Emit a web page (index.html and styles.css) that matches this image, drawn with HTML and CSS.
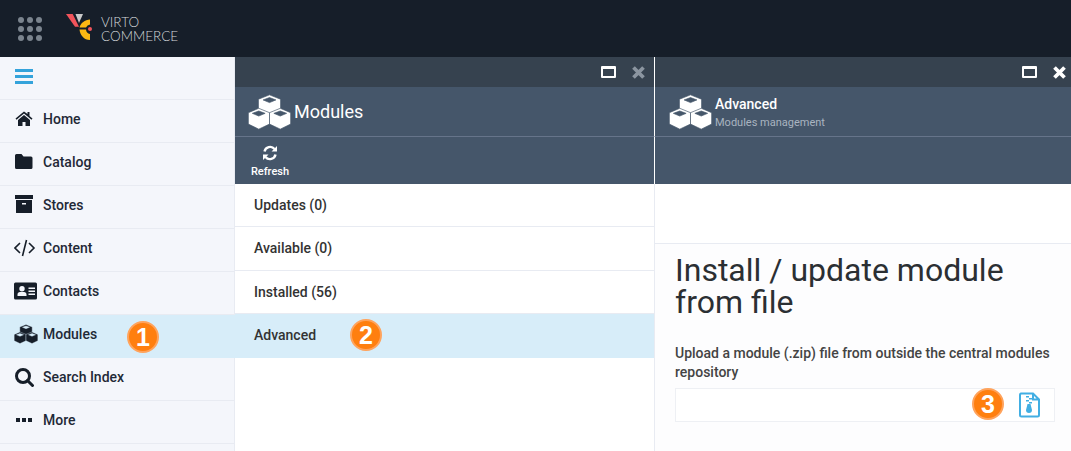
FILE: index.html
```html
<!DOCTYPE html>
<html lang="en">
<head>
  <meta charset="UTF-8" />
  <title>Virto Commerce - Modules</title>
  <link rel="stylesheet" href="styles.css">
</head>
<body>
  <svg class="defs" width="0" height="0" aria-hidden="true">
    <symbol id="cubes" viewBox="0 0 128 104">
      <path class="cube" fill-rule="evenodd" d="M64 1l33 13v33l-33 14-33-14V14zM64 9L45 16l19 8 19-8z"/>
      <path class="cube" fill-rule="evenodd" d="M32 41l32 13v34l-32 15L1 88V54zM32 49L13 56l19 8 19-8z"/>
      <path class="cube" fill-rule="evenodd" d="M96 41l31 13v34l-31 15-32-15V54zM96 49l-19 7 19 8 19-8z"/>
    </symbol>
  </svg>

  <header class="topbar">
    <div class="apps">
      <i></i><i></i><i></i><i></i><i></i><i></i><i></i><i></i><i></i>
    </div>
    <svg class="logo-mark" viewBox="0 0 26 26">
      <path fill="#f2545b" d="M0 0h6.700L13 12.700H9z"/>
      <path fill="#c9c9c9" d="M9.500 0H17l-4 9z"/>
      <path fill="#fdb813" d="M24 5.500v5a5 5 0 0 0-4 3h-6.500C14.500 9 19 6 24 5.500z"/>
      <path fill="#fdb813" d="M13.500 15.500H20a5 5 0 0 0 4 4.500V26C18 26 14 21 13.500 15.500z"/>
      <circle fill="#f2545b" cx="24" cy="15" r="2"/>
    </svg>
    <div class="logo-text">VIRTO<br>COMMERCE</div>
  </header>

  <div class="main">
    <nav class="sidebar">
      <div class="menu-toggle"><span></span><span></span><span></span></div>
      <a class="nav-item">
        <svg viewBox="0 0 24 20"><path d="M10 2.500L1.500 9.500l1 1.200L10 4.600l7.500 6.100 1-1.200-3-2.500V3h-2v2z"/><path d="M10 6l-6 5v6h4.500v-4h3v4H16v-6z"/></svg>
        Home
      </a>
      <a class="nav-item">
        <svg viewBox="0 0 24 20"><path d="M1 3.500A1.500 1.500 0 0 1 2.500 2h5l2 2.500h7.500A1.500 1.500 0 0 1 18.500 6v9.500a1.500 1.500 0 0 1-1.500 1.500H2.500A1.500 1.500 0 0 1 1 15.500z"/></svg>
        Catalog
      </a>
      <a class="nav-item">
        <svg viewBox="0 0 24 20"><path d="M1 0h18v4H1z"/><path fill-rule="evenodd" d="M2 5h16v12.500a.5.5 0 0 1-.5.5h-15a.5.5 0 0 1-.5-.5zM8 8v1.500h4V8z"/></svg>
        Stores
      </a>
      <a class="nav-item">
        <svg viewBox="0 0 24 20"><path class="line" d="M6 5l-5 5 5 5M15 5l5 5-5 5M12.500 2l-4 16"/></svg>
        Content
      </a>
      <a class="nav-item">
        <svg viewBox="0 0 24 20"><path fill-rule="evenodd" d="M1.500 1.500h20A1.500 1.500 0 0 1 23 3v14a1.500 1.500 0 0 1-1.500 1.500h-20A1.500 1.500 0 0 1 0 17V3a1.500 1.500 0 0 1 1.500-1.500zM8 5a2.700 2.700 0 1 0 0 5.400A2.700 2.700 0 0 0 8 5zM3.500 15h9v-1.500c0-1.500-1-2.500-2.500-2.500H6c-1.500 0-2.500 1-2.500 2.500zM14.500 6.500V8H21V6.500zM14.500 9.500V11H21V9.500zM14.500 12.500V14H21v-1.500z"/></svg>
        Contacts
      </a>
      <a class="nav-item active">
        <svg class="cubes" viewBox="0 0 24 20"><use href="#cubes" width="24" height="20"/></svg>
        Modules
        <span class="step step-1">1</span>
      </a>
      <a class="nav-item">
        <svg viewBox="0 0 24 20"><circle class="ring" cx="9" cy="9" r="6.500"/><path class="handle" d="M13.500 13.500l5 5"/></svg>
        Search Index
      </a>
      <a class="nav-item">
        <svg viewBox="0 0 24 20"><path d="M2 8h4v4H2zM8 8h4v4H8zM14 8h4v4h-4z"/></svg>
        More
      </a>
    </nav>

    <section class="blade blade-list">
      <div class="blade-bar">
        <span class="maximize"></span>
        <svg class="close muted" viewBox="0 0 12 12"><path d="M2 2l8 8M10 2l-8 8"/></svg>
      </div>
      <div class="blade-head">
        <svg class="blade-icon cubes"><use href="#cubes" width="43" height="36"/></svg>
        <h1 class="blade-title">Modules</h1>
      </div>
      <div class="toolbar">
        <button class="tool" type="button">
          <svg viewBox="0 0 16 16"><path class="refresh" d="M2.500 6.500A5.700 5.700 0 0 1 12.500 4M13.500 9.500A5.700 5.700 0 0 1 3.500 12"/><path d="M15 1v5.500H9.500zM1 15V9.500h5.500z"/></svg>
          Refresh
        </button>
      </div>
      <ul class="list">
        <li>Updates (0)</li>
        <li>Available (0)</li>
        <li>Installed (56)</li>
        <li class="active">Advanced<span class="step step-2">2</span></li>
      </ul>
    </section>

    <section class="blade blade-advanced">
      <div class="blade-bar">
        <span class="maximize"></span>
        <svg class="close" viewBox="0 0 12 12"><path d="M2 2l8 8M10 2l-8 8"/></svg>
      </div>
      <div class="blade-head">
        <svg class="blade-icon cubes"><use href="#cubes" width="43" height="36"/></svg>
        <div class="head-text">
          <div class="head-name">Advanced</div>
          <div class="head-sub">Modules management</div>
        </div>
      </div>
      <div class="toolbar"></div>
      <div class="spacer"></div>
      <div class="content">
        <h2>Install / update module from file</h2>
        <label class="upload-label">Upload a module (.zip) file from outside the central modules repository</label>
        <div class="upload-box">
          <span class="step step-3">3</span>
          <svg class="zip" viewBox="0 0 22 26"><path class="zip-outline" d="M2 1.500h12l6 6V23a1.500 1.500 0 0 1-1.500 1.500h-16A1.500 1.500 0 0 1 1 23V3a1.500 1.500 0 0 1 1-1.500zM14 1.500V7.500h6"/><path class="zip-teeth" d="M7 4h3v1.500H7zM10 6h3v1.500h-3zM7 8h3v1.500H7zM10 10h3v1.500h-3zM8.500 12h3l1.500 6a3 3 0 1 1-6 0z"/></svg>
        </div>
      </div>
    </section>
  </div>
</body>
</html>
```

FILE: styles.css
```css
* {
  box-sizing: border-box;
}

html, body {
  height: 100%;
}

body {
  margin: 0;
  overflow: hidden;
  font-family: Roboto, 'Liberation Sans', sans-serif;
  font-size: 14px;
  font-weight: 500;
  color: #1f2937;
  background: #fff;
}

.defs {
  display: block;
  height: 0;
}

/* top bar */
.topbar {
  height: 57px;
  background: #161e29;
  display: flex;
  align-items: center;
  padding-left: 18px;
}

.apps {
  display: grid;
  grid-template-columns: repeat(3, 6px);
  gap: 3px;
  margin-right: 21px;
}

.apps i {
  width: 6px;
  height: 6px;
  border-radius: 50%;
  background: #7b848e;
}

.logo-mark {
  width: 26px;
  height: 26px;
  margin: 0 9px 3px 3px;
}

.logo-text {
  font-family: Lato, sans-serif;
  font-weight: 300;
  font-size: 13.5px;
  line-height: 14px;
  color: #d4d7da;
}

/* layout */
.main {
  display: flex;
  height: 394px;
}

.sidebar {
  width: 235px;
  flex-shrink: 0;
  background: #f4f6fb;
  border-right: 1px solid #e8ebf2;
}

.menu-toggle {
  height: 43px;
  padding: 12px 15px 0;
  border-bottom: 1px solid #e8ebf2;
}

.menu-toggle span {
  display: block;
  width: 18px;
  height: 3px;
  margin-bottom: 3px;
  background: #34a3db;
}

.nav-item {
  position: relative;
  height: 43px;
  display: flex;
  align-items: center;
  padding: 0 0 5px 14px;
  border-bottom: 1px solid #e8ebf2;
  color: #1f2937;
}

.nav-item svg {
  width: 24px;
  height: 20px;
  margin-right: 5px;
  fill: #161e29;
}

.nav-item.active {
  background: #d7edf9;
  margin-right: -1px;
  border-bottom: 0;
}

.line {
  fill: none;
  stroke: #161e29;
  stroke-width: 1.6;
}

.ring, .handle {
  fill: none;
  stroke: #161e29;
  stroke-width: 3;
}

.handle {
  stroke-linecap: round;
}

/* cube icons */
.cubes {
  --cube-fill: #fff;
  --cube-gap: #45566a;
}

.nav-item .cubes {
  --cube-fill: #161e29;
  --cube-gap: #d7edf9;
}

.cube {
  fill: var(--cube-fill);
  stroke: var(--cube-gap);
  stroke-width: 2;
}

/* blades */
.blade {
  display: flex;
  flex-direction: column;
}

.blade-list {
  width: 420px;
  flex-shrink: 0;
  border-right: 1px solid #e8ebf2;
}

.blade-advanced {
  flex: 1;
  background: #fff;
}

.blade-bar {
  height: 30px;
  background: #36424f;
  display: flex;
  align-items: center;
  justify-content: flex-end;
  gap: 15px;
  padding-right: 4px;
  flex-shrink: 0;
}

.blade-list .blade-bar {
  padding-right: 8px;
}

.blade-list .blade-bar,
.blade-list .blade-head,
.blade-list .toolbar {
  margin-right: -1px;
  border-right: 1px solid #fff;
}

.maximize {
  width: 15px;
  height: 12px;
  border: 2px solid #fff;
  border-top-width: 3px;
  border-radius: 1px;
}

.close {
  width: 15px;
  height: 15px;
  fill: none;
  stroke: #fff;
  stroke-width: 3;
}

.close.muted {
  stroke: #8b95a0;
}

.blade-head {
  height: 50px;
  background: #45566a;
  border-bottom: 1px solid #66748a;
  display: flex;
  align-items: center;
  padding-left: 13px;
  color: #fff;
  flex-shrink: 0;
}

.blade-icon {
  width: 43px;
  height: 36px;
  margin-right: 3px;
}

.blade-title {
  margin: 0;
  font-size: 18px;
  font-weight: 400;
}

.blade-advanced .blade-head {
  padding-left: 14px;
}

.head-text {
  padding-top: 3px;
}

.head-name {
  font-size: 14px;
  line-height: 18px;
}

.head-sub {
  margin-top: 1px;
  font-size: 11px;
  font-weight: 400;
  line-height: 18px;
  color: #a9b4c0;
}

.toolbar {
  height: 47px;
  background: #45566a;
  flex-shrink: 0;
}

.tool {
  display: flex;
  flex-direction: column;
  align-items: center;
  width: 70px;
  padding: 8px 0 0;
  border: 0;
  background: none;
  color: #fff;
  font: 500 11px Roboto, sans-serif;
}

.tool svg {
  width: 16px;
  height: 16px;
  margin-bottom: 4px;
  fill: #fff;
}

.refresh {
  fill: none;
  stroke: #fff;
  stroke-width: 2.4;
}

/* list blade */
.list {
  margin: 0;
  padding: 0;
  list-style: none;
}

.list li {
  position: relative;
  height: 43px;
  line-height: 42px;
  padding-left: 19px;
  border-bottom: 1px solid #e8ebf2;
  color: #333;
}

.list li:nth-child(even) {
  height: 44px;
}

.list li.active {
  background: #d7edf9;
  border-bottom: 0;
}

/* advanced blade */
.spacer {
  height: 60px;
  border-bottom: 1px solid #e8ebf2;
  flex-shrink: 0;
}

.content {
  flex: 1;
  padding: 10px 16px 0 20px;
  background: #fdfdfe;
}

.content h2 {
  margin: 0 0 26px;
  font-size: 32px;
  font-weight: 400;
  line-height: 32px;
  color: #2b2f33;
}

.upload-label {
  display: block;
  font-size: 14px;
  line-height: 19px;
  color: #444;
}

.upload-box {
  position: relative;
  height: 34px;
  margin-top: 6px;
  background: #fff;
  border: 1px solid #eef0f4;
  display: flex;
  align-items: center;
  justify-content: flex-end;
  padding-right: 13px;
}

.zip {
  width: 22px;
  height: 26px;
}

.zip-outline {
  fill: none;
  stroke: #41aee3;
  stroke-width: 2;
}

.zip-teeth {
  fill: #41aee3;
}

/* numbered callouts */
.step {
  position: absolute;
  width: 32px;
  height: 32px;
  border-radius: 50%;
  background: #ff7f0f;
  border: 2px solid #ffa35c;
  color: #fff;
  font: bold 25px/28px 'Liberation Sans', sans-serif;
  text-align: center;
}

.step-1 {
  left: 127px;
  top: 6px;
}

.step-2 {
  left: 115px;
  top: 5px;
}

.step-3 {
  left: 296px;
  top: -1px;
}
```
